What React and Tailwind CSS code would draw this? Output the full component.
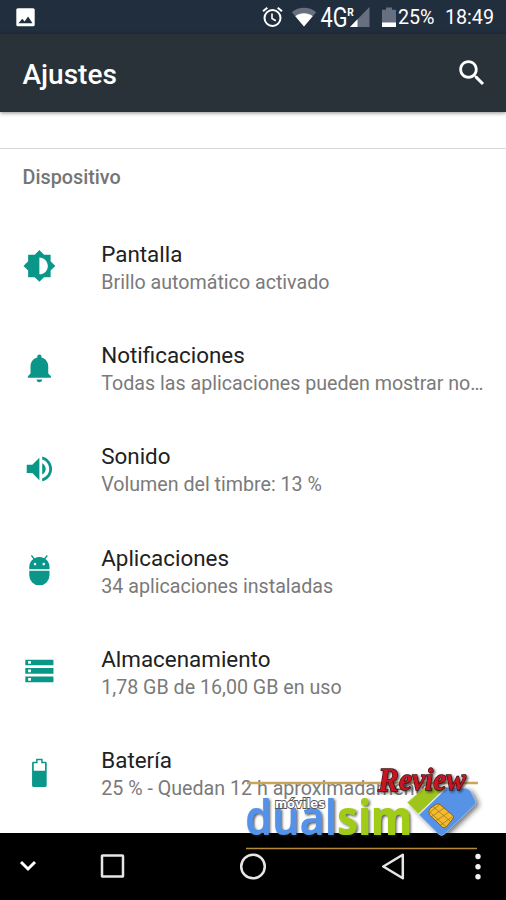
const items = [
  { icon: 'display', title: 'Pantalla', text: 'Brillo automático activado' },
  { icon: 'bell', title: 'Notificaciones', text: 'Todas las aplicaciones pueden mostrar notificaciones' },
  { icon: 'sound', title: 'Sonido', text: 'Volumen del timbre: 13 %' },
  { icon: 'apps', title: 'Aplicaciones', text: '34 aplicaciones instaladas' },
  { icon: 'storage', title: 'Almacenamiento', text: '1,78 GB de 16,00 GB en uso' },
  { icon: 'battery', title: 'Batería', text: '25 % - Quedan 12 h aproximadamente' },
];

const icons = {
  display: (
    <path d="M20 15.31L23.31 12 20 8.69V4h-4.69L12 .69 8.69 4H4v4.69L.69 12 4 15.31V20h4.69L12 23.31 15.31 20H20v-4.69zM12 18V6c3.31 0 6 2.69 6 6s-2.69 6-6 6z" />
  ),
  bell: (
    <path d="M12 22.2c1.1 0 2-.9 2-2h-4c0 1.1.9 2 2 2zM18.3 16v-5c0-3.07-1.9-5.64-4.8-6.32V4c0-.83-.67-1.5-1.5-1.5s-1.5.67-1.5 1.5v.68C7.6 5.36 5.7 7.92 5.7 11v5l-1.9 2v1h16.4v-1l-1.9-2z" />
  ),
  sound: (
    <path d="M3 9v6h4l5 5V4L7 9H3zm13.5 3c0-1.77-1.02-3.29-2.5-4.03v8.05c1.48-.73 2.5-2.25 2.5-4.02zM14 3.23v2.06c2.89.86 5 3.54 5 6.71s-2.11 5.85-5 6.71v2.06c4.01-.91 7-4.49 7-8.77s-2.99-7.86-7-8.77z" />
  ),
  apps: (
    <>
      <path d="M4.8 12.6h14.4v3.2a7.2 7.2 0 0 1-14.4 0z" />
      <path
        fillRule="evenodd"
        d="M4.8 11.6V10c0-2.3 1.1-4.4 2.9-5.7L6 2.1l.7-.6 1.9 2.2a7.4 7.4 0 0 1 6.8 0l1.9-2.2.7.6-1.7 2.2A7 7 0 0 1 19.2 10v1.6zM8.9 7a.9.9 0 1 0 0 1.8.9.9 0 0 0 0-1.8zm6.2 0a.9.9 0 1 0 0 1.8.9.9 0 0 0 0-1.8z"
      />
    </>
  ),
  storage: (
    <path d="M2 20h20v-4H2v4zm2-3h2v2H4v-2zM2 4v4h20V4H2zm4 3H4V5h2v2zm-4 7h20v-4H2v4zm2-3h2v2H4v-2z" />
  ),
  battery: (
    <path
      fillRule="evenodd"
      d="M7.8 4h1.9V2h4.6v2h1.9c.6 0 1 .4 1 1v16c0 .6-.4 1-1 1H7.8c-.6 0-1-.4-1-1V5c0-.6.4-1 1-1zm.2 1.2v5.3h8V5.2h-2.7V3.1h-2.6v2.1z"
    />
  ),
};

function StatusBar() {
  return (
    <div className="flex h-[34px] items-center bg-[#212e3e] pl-4 pr-3 text-white">
      <svg className="h-[19px] w-[19px]" viewBox="0 0 19 19">
        <rect x="0.3" y="0.3" width="18.4" height="18" rx="1.5" fill="#fff" />
        <path d="M2.5 15.3l3.7-4.5 2.4 2.6 3.5-4.8 4.4 6.7z" fill="#212e3e" />
      </svg>
      <svg className="ml-auto h-[22px] w-[21px]" viewBox="0 0 21 22" fill="none" stroke="#fff">
        <circle cx="10.5" cy="12" r="8" strokeWidth="2" />
        <path d="M1 5.3L5.3 1.7M20 5.3L15.7 1.7" strokeWidth="2" />
        <path d="M10 7.5v5l3.8 2.2" strokeWidth="1.6" />
      </svg>
      <svg className="ml-2 h-[20px] w-[26px]" viewBox="0 0 26 20">
        <path d="M.8 5.2C8-.6 18-.6 25.2 5.2L13 19.5z" fill="#667080" />
        <path d="M4.3 9.2c5.3-3.8 12.1-3.8 17.4 0L13 19.5z" fill="#fff" />
      </svg>
      <svg className="ml-[3px] h-[26px] w-[52px] overflow-visible" viewBox="0 0 52 26">
        <text x="0.5" y="22.8" fontFamily="Roboto, sans-serif" fontSize="27" textLength="27" lengthAdjust="spacingAndGlyphs" fill="#fff">4G</text>
        <path d="M49.5 3v20H30z" fill="#667080" />
        <path d="M37.5 15.3V23H30z" fill="#fff" />
        <text x="27.3" y="11.5" fontFamily="Roboto, sans-serif" fontSize="11.5" fontWeight="700" textLength="6.5" lengthAdjust="spacingAndGlyphs" fill="#fff">R</text>
      </svg>
      <svg className="ml-[10px] h-[21px] w-[14px]" viewBox="0 0 14 21">
        <path d="M4 .5h6v2.3h4V16H0V2.8h4z" fill="#667080" />
        <path d="M0 15.5h14V20H0z" fill="#fff" />
      </svg>
      <span className="ml-[2px] mt-[2px] w-[38px] whitespace-nowrap text-[19.7px] tracking-[-0.1px]">25%</span>
      <span className="ml-[9px] mt-[2px] whitespace-nowrap text-[19.7px]">18:49</span>
    </div>
  );
}

function Row({ item }) {
  return (
    <div className="flex h-[101.25px] items-center pl-[22.5px] pr-[20px]">
      <svg className="mb-[3px] h-[33.75px] w-[33.75px] shrink-0 -translate-x-[0.5px]" viewBox="0 0 24 24" fill="#0a9688">
        {icons[item.icon]}
      </svg>
      <div className="ml-[45px] mt-[2.5px] min-w-0 flex-1">
        <div className="text-[22.4px] leading-[28px] text-[#212121]">{item.title}</div>
        <div className="truncate text-[19.65px] leading-[30px] text-[#7a7a7a]">{item.text}</div>
      </div>
    </div>
  );
}

function NavBar() {
  return (
    <div className="flex h-[67px] items-center bg-black">
      <svg className="ml-[19px] h-[18px] w-[18px]" viewBox="0 0 18 18" fill="none" stroke="#fff" strokeWidth="3">
        <path d="M2 4l7 7 7-7" />
      </svg>
      <svg className="ml-[63px] h-[26px] w-[26px]" viewBox="0 0 26 26" fill="none" stroke="#e6e6e6" strokeWidth="2.5">
        <rect x="2" y="1.5" width="21" height="21" rx="0.6" />
      </svg>
      <svg className="ml-[113px] h-[28px] w-[28px]" viewBox="0 0 28 28" fill="none" stroke="#e6e6e6" strokeWidth="2.5">
        <circle cx="14" cy="13.5" r="11.8" />
      </svg>
      <svg className="ml-[115px] h-[28px] w-[24px]" viewBox="0 0 24 28" fill="none" stroke="#e6e6e6" strokeWidth="2.5" strokeLinejoin="round">
        <path d="M20.8 1.7v23.5L1.3 13.5z" />
      </svg>
      <svg className="ml-[68px] h-[28px] w-[8px]" viewBox="0 0 8 28" fill="#f2f2f2">
        <circle cx="4" cy="3.5" r="2.7" />
        <circle cx="4" cy="13.7" r="2.7" />
        <circle cx="4" cy="23.8" r="2.7" />
      </svg>
    </div>
  );
}

// Site watermark, overlaps the last row and the navigation bar
function Watermark() {
  return (
    <svg className="absolute left-[240px] top-[758px] h-[96px] w-[250px]" viewBox="240 758 250 96">
      <defs>
        <filter id="shade" x="-20%" y="-20%" width="150%" height="150%">
          <feDropShadow dx="1.5" dy="1.5" stdDeviation="0.9" floodColor="#222" floodOpacity="0.75" />
        </filter>
        <filter id="cardShade" x="-20%" y="-20%" width="150%" height="150%">
          <feDropShadow dx="3" dy="2" stdDeviation="2.5" floodColor="#222" floodOpacity="0.6" />
        </filter>
      </defs>
      <path d="M247 783h231" stroke="#c9a45a" strokeWidth="2.5" />
      <path d="M246 848.5h231" stroke="#b58a38" strokeWidth="1.3" />
      <g filter="url(#shade)" fontFamily="'Noto Sans', sans-serif" fontSize="48">
        <text x="245" y="835" fontWeight="600" textLength="92" lengthAdjust="spacingAndGlyphs" fill="#5292e8">dual</text>
        <text x="337" y="835" fontWeight="800" textLength="75" lengthAdjust="spacingAndGlyphs" fill="#a0cb12">sim</text>
      </g>
      <text x="275" y="808" fontFamily="'DejaVu Sans', sans-serif" fontSize="12.5" fontWeight="700" textLength="50" lengthAdjust="spacingAndGlyphs" fill="#fff" stroke="#555" strokeWidth="1.8" paintOrder="stroke">móviles</text>
      <g filter="url(#cardShade)">
        <path d="M407.500 802.500l16-14q2-1.500 5-1.500l18 1-28 26z" fill="#9fc51a" stroke="#c4dc6b" strokeWidth="0.7" />
        <path d="M419 814.500l27-27 19 1q4 0 6 3.500l4.500 9q1 2-1 4l-30 29q-3 3-6 0z" fill="#5793e6" stroke="#8fb9f2" strokeWidth="0.7" />
        <path d="M418.500 814.500l27-26" stroke="#e9f1d8" strokeWidth="1.2" />
      </g>
      <path d="M430 808.500l6-4.200q2-1.200 4 .3l12.500 10.500q1.800 1.700.3 3.800l-6.500 8q-1.800 1.800-4 .2l-12.800-12.200q-2-3.400.5-6.400z" fill="#f5bb2e" stroke="#7e5e16" strokeWidth="0.9" />
      <path d="M433 806.500l17 14.500M444 808l-13 9M449 812l-13.500 9M439 805l-10 8M452 817l-12 8.500M429.500 812l17 15" fill="none" stroke="#94701d" strokeWidth="0.7" />
      <g filter="url(#shade)" fontFamily="'Liberation Serif', serif" fontStyle="italic" fontWeight="700">
        <text x="378" y="791" textLength="88" lengthAdjust="spacingAndGlyphs" fill="#c51623" stroke="#3d0a0e" strokeWidth="1.4" paintOrder="stroke">
          <tspan fontSize="34">R</tspan>
          <tspan fontSize="32" dy="-1.5">eview</tspan>
        </text>
      </g>
    </svg>
  );
}

export default function App() {
  return (
    <div className="relative flex h-[900px] w-[506px] flex-col overflow-hidden bg-white font-[Roboto,sans-serif]">
      <StatusBar />
      <header className="flex h-[78px] shrink-0 items-center justify-between bg-[#283238] pl-[22.5px] pr-[17px] text-white shadow-[0_1px_4px_rgba(0,0,0,0.45)]">
        <h1 className="mt-[3px] text-[28px] font-medium">Ajustes</h1>
        <svg className="h-[34px] w-[34px]" viewBox="0 0 24 24" fill="#fff">
          <path d="M15.5 14h-.79l-.28-.27C15.41 12.59 16 11.11 16 9.5 16 5.91 13.09 3 9.5 3S3 5.91 3 9.5 5.91 16 9.5 16c1.61 0 3.09-.59 4.23-1.57l.27.28v.79l5 4.99L20.49 19l-4.99-5zm-6 0C7.01 14 5 11.99 5 9.5S7.01 5 9.5 5 14 7.01 14 9.5 11.99 14 9.5 14z" />
        </svg>
      </header>
      <main className="flex-1 overflow-hidden pt-[36px]">
        <section className="border-t border-[#d8d8d8]">
          <h2 className="h-[68px] px-[22.5px] pt-[15px] text-[19.8px] font-medium leading-[28px] text-[#757575]">Dispositivo</h2>
          {items.map((item) => (
            <Row key={item.title} item={item} />
          ))}
        </section>
      </main>
      <NavBar />
      <Watermark />
    </div>
  );
}
